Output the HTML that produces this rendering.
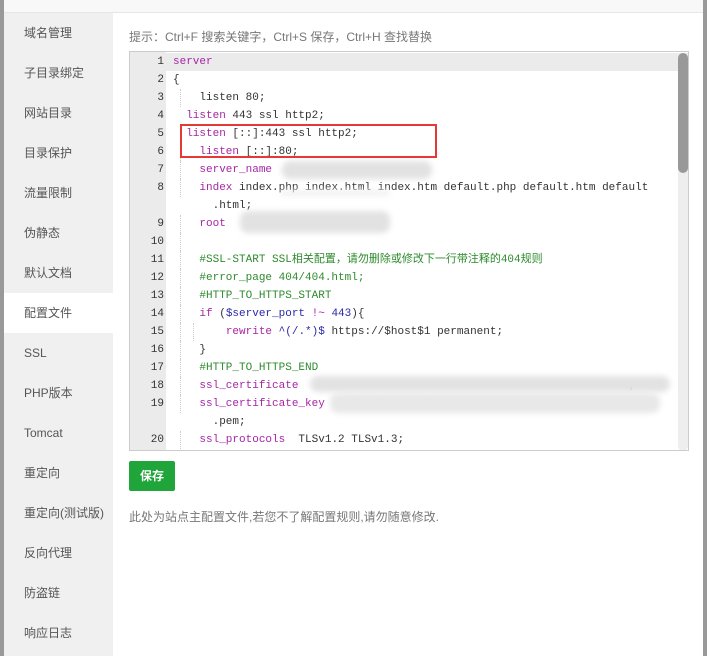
<!DOCTYPE html>
<html><head><meta charset="utf-8"><style>
*{margin:0;padding:0;box-sizing:border-box}
body{width:707px;height:656px;overflow:hidden;background:#fff;position:relative;font-family:"Liberation Sans","Noto Sans CJK SC",sans-serif}
.edgeL{position:absolute;left:0;top:0;width:4px;height:656px;background:#999}
.edgeR{position:absolute;right:0;top:0;width:4px;height:656px;background:#999}
.top{position:absolute;left:4px;right:4px;top:0;height:13px;background:#f8f8f8;border-bottom:1px solid #e6e6e6}
.side{position:absolute;left:4px;top:13px;width:109px;height:643px;background:#f0f0f0}
.side div{height:40px;line-height:40px;padding-left:20px;font-size:12px;color:#555}
.side .on{background:#fff}
.tip{position:absolute;left:129px;top:28px;font-size:12px;color:#777}
.ed{position:absolute;left:129px;top:51px;width:560px;height:400px;border:1px solid #ccc;overflow:hidden;background:#fff}
.gut{position:absolute;left:0;top:0;width:36px;height:100%;background:#ebebeb}
.act{position:absolute;left:36px;top:1px;width:540px;height:18px;background:#ebebeb}
.code{position:absolute;left:0;top:1px;width:100%;font-family:"Liberation Mono",monospace;font-size:11px}
.l{height:18px;line-height:18px;position:relative;white-space:pre;color:#333}
.n{position:absolute;left:0;width:34px;text-align:right;color:#333}
.t{position:absolute;left:43px}
.k{color:#a626a4}.c{color:#2e8b2e}.b{color:#2a2aa8}
.g{position:absolute;top:0;height:18px;border-left:1px dotted #ccc}
.sb{position:absolute;left:548px;top:1px;width:10px;height:398px;background:#eee;border-radius:5px}
.th{position:absolute;left:548px;top:1px;width:10px;height:120px;background:#999;border-radius:5px}
.blur{position:absolute;background:#e2e2e2;filter:blur(3px);border-radius:8px}
.red{position:absolute;left:180px;top:124px;width:257px;height:34px;border:2px solid #e53935}
.btn{position:absolute;left:129px;top:461px;width:46px;height:30px;background:#20a53a;color:#fff;font-size:12px;font-weight:bold;line-height:30px;text-align:center;border-radius:2px}
.note{position:absolute;left:129px;top:508px;font-size:12px;color:#777}
</style></head><body>
<div class="edgeL"></div><div class="edgeR"></div>
<div class="top"></div>
<div class="side">
<div>域名管理</div><div>子目录绑定</div><div>网站目录</div><div>目录保护</div><div>流量限制</div><div>伪静态</div><div>默认文档</div><div class="on">配置文件</div><div>SSL</div><div>PHP版本</div><div>Tomcat</div><div>重定向</div><div>重定向(测试版)</div><div>反向代理</div><div>防盗链</div><div>响应日志</div>
</div>
<div class="tip">提示：Ctrl+F 搜索关键字，Ctrl+S 保存，Ctrl+H 查找替换</div>
<div class="ed">
<div class="gut"></div><div class="act"></div>
<div class="code">
<div class="l"><span class="n">1</span><span class="t k">server</span></div>
<div class="l"><span class="n">2</span><span class="t">{</span></div>
<div class="l"><span class="n">3</span><span class="g" style="left:50px"></span><span class="t">    listen 80;</span></div>
<div class="l"><span class="n">4</span><span class="t">  <span class="k">listen</span> 443 ssl http2;</span></div>
<div class="l"><span class="n">5</span><span class="t">  <span class="k">listen</span> [::]:443 ssl http2;</span></div>
<div class="l"><span class="n">6</span><span class="g" style="left:50px"></span><span class="t">    <span class="k">listen</span> [::]:80;</span></div>
<div class="l"><span class="n">7</span><span class="g" style="left:50px"></span><span class="t">    <span class="k">server_name</span></span></div>
<div class="l"><span class="n">8</span><span class="g" style="left:50px"></span><span class="t">    <span class="k">index</span> index.php index.html index.htm default.php default.htm default</span></div>
<div class="l"><span class="t">      .html;</span></div>
<div class="l"><span class="n">9</span><span class="g" style="left:50px"></span><span class="t">    <span class="k">root</span></span></div>
<div class="l"><span class="n">10</span><span class="g" style="left:50px"></span></div>
<div class="l"><span class="n">11</span><span class="g" style="left:50px"></span><span class="t c">    #SSL-START SSL相关配置，请勿删除或修改下一行带注释的404规则</span></div>
<div class="l"><span class="n">12</span><span class="g" style="left:50px"></span><span class="t c">    #error_page 404/404.html;</span></div>
<div class="l"><span class="n">13</span><span class="g" style="left:50px"></span><span class="t c">    #HTTP_TO_HTTPS_START</span></div>
<div class="l"><span class="n">14</span><span class="g" style="left:50px"></span><span class="t">    <span class="k">if</span> (<span class="b">$server_port</span> <span class="k">!~</span> <span class="b">443</span>){</span></div>
<div class="l"><span class="n">15</span><span class="g" style="left:50px"></span><span class="g" style="left:63px"></span><span class="t">        <span class="k">rewrite</span> <span class="b">^(/.*)$</span> https://$host$1 permanent;</span></div>
<div class="l"><span class="n">16</span><span class="g" style="left:50px"></span><span class="t">    }</span></div>
<div class="l"><span class="n">17</span><span class="g" style="left:50px"></span><span class="t c">    #HTTP_TO_HTTPS_END</span></div>
<div class="l"><span class="n">18</span><span class="g" style="left:50px"></span><span class="t">    <span class="k">ssl_certificate</span>                                                  ;</span></div>
<div class="l"><span class="n">19</span><span class="g" style="left:50px"></span><span class="t">    <span class="k">ssl_certificate_key</span>    /www/server/</span></div>
<div class="l"><span class="t">      .pem;</span></div>
<div class="l"><span class="n">20</span><span class="g" style="left:50px"></span><span class="t">    <span class="k">ssl_protocols</span>  TLSv1.2 TLSv1.3;</span></div>
</div>
<div class="sb"></div><div class="th"></div>
</div>
<div class="blur" style="left:282px;top:161px;width:150px;height:18px"></div>
<div class="blur" style="left:280px;top:190px;width:110px;height:6px;background:#f2f2f2"></div>
<div class="blur" style="left:240px;top:211px;width:150px;height:22px"></div>
<div class="blur" style="left:310px;top:376px;width:360px;height:16px"></div>
<div class="blur" style="left:330px;top:393px;width:330px;height:20px;background:#e8e8e8"></div>
<div class="red"></div>
<div class="btn">保存</div>
<div class="note">此处为站点主配置文件,若您不了解配置规则,请勿随意修改.</div>
</body></html>
